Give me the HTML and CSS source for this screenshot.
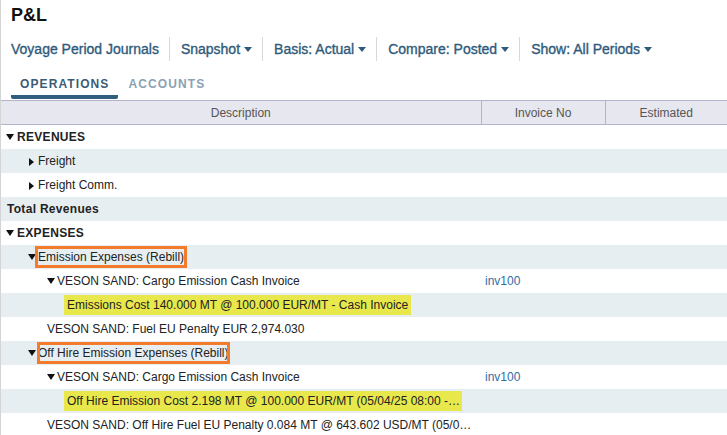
FILE: index.html
```html
<!DOCTYPE html>
<html lang="en">
<head>
    <meta charset="UTF-8">
    <title>P&amp;L</title>
    <link rel="stylesheet" href="styles.css">
</head>
<body>

<div class="page">
    <h1 class="title">P&amp;L</h1>

    <div class="toolbar">
        <span class="tool">Voyage Period Journals</span>
        <span class="tool">Snapshot <i class="caret"></i></span>
        <span class="tool">Basis: Actual <i class="caret"></i></span>
        <span class="tool">Compare: Posted <i class="caret"></i></span>
        <span class="tool">Show: All Periods <i class="caret"></i></span>
    </div>

    <div class="tabs">
        <span class="tab active">OPERATIONS</span>
        <span class="tab">ACCOUNTS</span>
    </div>

    <table class="grid">
        <colgroup>
            <col class="col-desc">
            <col class="col-inv">
            <col class="col-est">
        </colgroup>
        <thead>
            <tr>
                <th>Description</th>
                <th>Invoice No</th>
                <th>Estimated</th>
            </tr>
        </thead>
        <tbody>
            <tr>
                <td class="lvl0 strong"><i class="down"></i>REVENUES</td>
                <td></td><td></td>
            </tr>
            <tr class="alt">
                <td class="lvl1"><i class="right"></i>Freight</td>
                <td></td><td></td>
            </tr>
            <tr>
                <td class="lvl1"><i class="right"></i>Freight Comm.</td>
                <td></td><td></td>
            </tr>
            <tr class="alt">
                <td class="lvl0 strong total">Total Revenues</td>
                <td></td><td></td>
            </tr>
            <tr>
                <td class="lvl0 strong"><i class="down"></i>EXPENSES</td>
                <td></td><td></td>
            </tr>
            <tr class="alt">
                <td class="lvl1"><i class="down"></i><span class="mark">Emission Expenses (Rebill)</span></td>
                <td></td><td></td>
            </tr>
            <tr>
                <td class="lvl2"><i class="down"></i>VESON SAND: Cargo Emission Cash Invoice</td>
                <td class="inv">inv100</td><td></td>
            </tr>
            <tr class="alt">
                <td class="lvl3"><div class="clip"><span class="hl">Emissions Cost 140.000 MT @ 100.000 EUR/MT - Cash Invoice</span></div></td>
                <td></td><td></td>
            </tr>
            <tr>
                <td class="lvl2">VESON SAND: Fuel EU Penalty EUR 2,974.030</td>
                <td></td><td></td>
            </tr>
            <tr class="alt">
                <td class="lvl1"><i class="down"></i><span class="mark tight">Off Hire Emission Expenses (Rebill)</span></td>
                <td></td><td></td>
            </tr>
            <tr>
                <td class="lvl2"><i class="down"></i>VESON SAND: Cargo Emission Cash Invoice</td>
                <td class="inv">inv100</td><td></td>
            </tr>
            <tr class="alt">
                <td class="lvl3"><div class="clip"><span class="hl">Off Hire Emission Cost 2.198 MT @ 100.000 EUR/MT (05/04/25 08:00 - 05/04/25 09:00)</span></div></td>
                <td></td><td></td>
            </tr>
            <tr>
                <td class="lvl2"><div class="clip wide">VESON SAND: Off Hire Fuel EU Penalty 0.084 MT @ 643.602 USD/MT (05/04/25 08:00 - 05/04/25 09:00)</div></td>
                <td></td><td></td>
            </tr>
        </tbody>
    </table>
</div>

</body>
</html>
```

FILE: styles.css
```css
body {
    margin: 0;
    font-family: "Liberation Sans", Arial, sans-serif;
    background-color: #fff;
    color: #222;
}

.page {
    border-left: 1px solid #d4d4d4;
    height: 100vh;
    box-sizing: border-box;
    overflow: hidden;
}

.title {
    margin: 0;
    padding: 4px 0 0 10px;
    font-size: 18px;
    line-height: 22px;
    font-weight: bold;
    color: #111;
}

.toolbar {
    display: flex;
    align-items: center;
    margin-top: 11px;
    height: 24px;
}

.tool {
    display: flex;
    align-items: center;
    padding: 0 10px 0 11px;
    height: 24px;
    font-size: 14px;
    color: #2f5b7b;
    -webkit-text-stroke: 0.35px #2f5b7b;
    border-left: 1px solid #d6d8de;
}

.tool:first-child {
    padding-left: 10px;
    border-left: none;
}

.caret {
    display: inline-block;
    margin-left: 4px;
    width: 0;
    height: 0;
    border-left: 4.5px solid transparent;
    border-right: 4.5px solid transparent;
    border-top: 5px solid #2f5b7b;
}

.tabs {
    display: flex;
    margin-top: 12px;
    padding-left: 10px;
    height: 26px;
}

.tab {
    padding: 4px 9px 0 9px;
    font-size: 12px;
    font-weight: bold;
    letter-spacing: 1.1px;
    color: #8aa2b4;
    box-sizing: border-box;
    height: 22px;
}

.tab.active {
    color: #3b5c74;
    border-bottom: 4px solid #2f5f7c;
    border-radius: 0 0 2px 2px;
    height: 26px;
    margin-right: 1px;
}

.grid {
    width: 100%;
    margin-top: 1px;
    border-collapse: collapse;
    table-layout: fixed;
    font-size: 12px;
}

.col-desc { width: 480px; }
.col-inv { width: 124px; }

.grid th {
    height: 23px;
    padding: 0;
    font-weight: normal;
    color: #555;
    background-color: #e7e7ef;
    border-top: 1px solid #b3b3cc;
    border-bottom: 1px solid #b3b3cc;
    border-left: 1px solid #b3b3cc;
    text-align: center;
}

.grid th:first-child {
    border-left: none;
}

.grid td {
    height: 24px;
    padding: 0;
    white-space: nowrap;
    overflow: hidden;
    color: #222;
}

.grid tr.alt td {
    background-color: #e7eef2;
}

.clip {
    width: 398px;
    overflow: hidden;
    text-overflow: ellipsis;
    white-space: nowrap;
    line-height: 24px;
}

.clip.wide {
    width: 428px;
}

.lvl0 { padding-left: 5px !important; }
.lvl1 { padding-left: 27px !important; }
.lvl2 { padding-left: 46px !important; }
.lvl3 { padding-left: 63px !important; }

.total { padding-left: 6px !important; }

.strong {
    font-weight: bold;
    letter-spacing: 0.3px;
}

.down {
    display: inline-block;
    vertical-align: 1px;
    margin-right: 2px;
    width: 0;
    height: 0;
    border-left: 4.5px solid transparent;
    border-right: 4.5px solid transparent;
    border-top: 6px solid #111;
}

.strong .down {
    margin-right: 3px;
}

.right {
    display: inline-block;
    vertical-align: -1px;
    margin-left: 1px;
    margin-right: 4px;
    width: 0;
    height: 0;
    border-top: 4.5px solid transparent;
    border-bottom: 4.5px solid transparent;
    border-left: 5px solid #111;
}

.inv {
    padding-left: 4px !important;
    color: #2f6ea6 !important;
}

.hl {
    background-color: #e8e84c;
    padding: 3px 3px;
}

.mark {
    padding: 1px 0;
    outline: 3px solid #f47b2c;
}

.mark.tight {
    padding: 3px 0;
    outline-offset: -2px;
}
```
